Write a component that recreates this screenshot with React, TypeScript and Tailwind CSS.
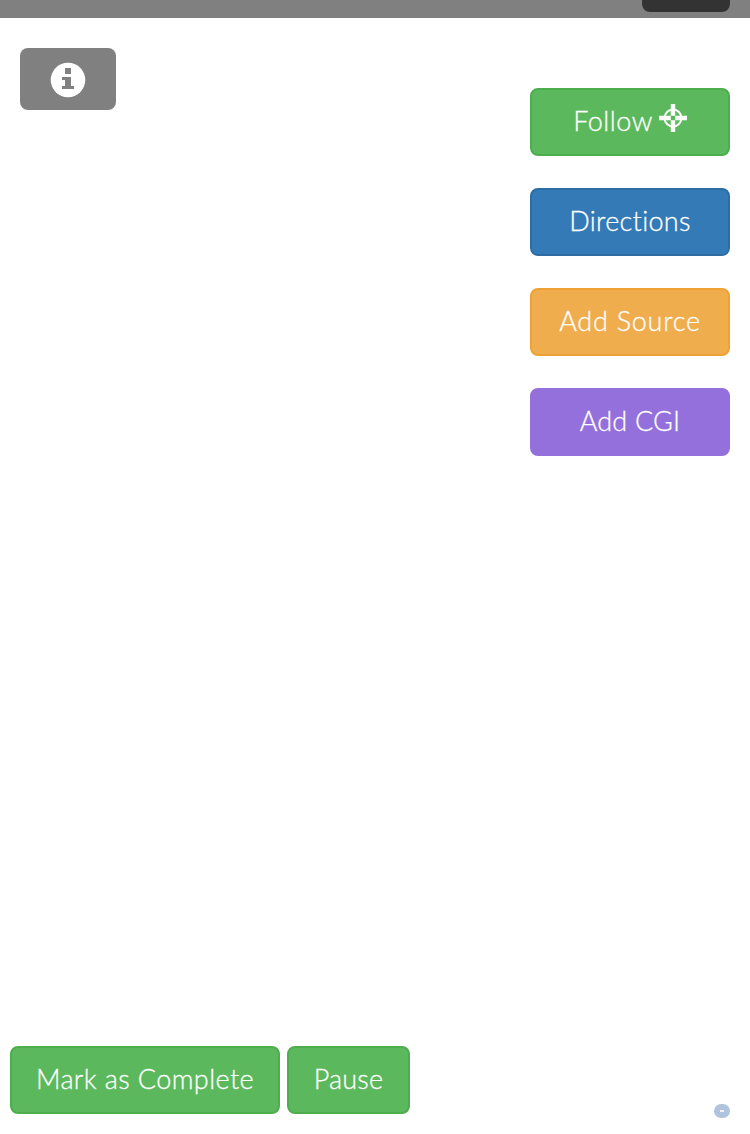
import type { ReactNode } from 'react';

function Action({ tone, label, spacing, children }: { tone: string; label: string; spacing: string; children?: ReactNode }) {
  return (
    <button className={`flex h-[68px] items-center justify-center whitespace-nowrap rounded-lg border-2 pb-1 text-[27px] font-light leading-none text-white [-webkit-text-stroke:0.3px_white] [font-variant-ligatures:none] ${tone}`}>
      <span className={spacing}>{label}</span>
      {children}
    </button>
  );
}

function Crosshair() {
  return (
    <svg className="mb-[5px] ml-[6px] size-7 shrink-0" viewBox="0 0 28 28" fill="none" stroke="white">
      <circle cx="14" cy="14" r="8.4" strokeWidth="2" />
      <path d="M14 0v11.8M14 16.2V28M0 14h11.8M16.2 14H28" strokeWidth="4.4" />
    </svg>
  );
}

export default function App() {
  return (
    <main className="flex h-[1134px] w-[750px] flex-col overflow-hidden bg-white font-['Lato',sans-serif]">
      <header className="flex h-[18px] shrink-0 justify-end bg-[#808080] pr-5">
        <div className="h-3 w-[88px] rounded-b-lg bg-[#333]" />
      </header>
      <section className="flex grow items-start justify-between px-5">
        <button aria-label="Information" className="mt-[30px] flex h-[62px] w-24 items-center justify-center rounded-lg bg-[#808080]">
          <svg className="mt-[2px] size-9" viewBox="0 0 36 36">
            <circle cx="18" cy="18" r="17.3" fill="white" />
            <path d="M15 6h6v6h-6zM12 15h9v9h3v3H12v-3h3v-6h-3z" fill="#808080" />
          </svg>
        </button>
        <nav className="mt-[70px] flex w-[200px] flex-col gap-8">
          <Action tone="border-[#4cae4c] bg-[#5cb85c]" label="Follow" spacing="tracking-[0.5px]"><Crosshair /></Action>
          <Action tone="border-[#2e6da4] bg-[#337ab7]" label="Directions" spacing="tracking-[0.3px]" />
          <Action tone="border-[#eea236] bg-[#f0ad4e]" label="Add Source" spacing="tracking-[0.75px]" />
          <Action tone="border-[#9370db] bg-[#9370db]" label="Add CGI" spacing="tracking-[0.2px]" />
        </nav>
      </section>
      <footer className="flex shrink-0 items-end justify-between pb-5 pl-[10px] pr-5">
        <div className="flex gap-[7px]">
          <Action tone="w-[270px] border-[#4cae4c] bg-[#5cb85c]" label="Mark as Complete" spacing="tracking-[0.4px]" />
          <Action tone="w-[123px] border-[#4cae4c] bg-[#5cb85c]" label="Pause" spacing="tracking-[0.2px]" />
        </div>
        <div className="-mb-1 flex h-[14px] w-4 items-center justify-center rounded-[7px] bg-[#b0c4de]">
          <div className="h-[2px] w-1 bg-[#f3f0ed]" />
        </div>
      </footer>
    </main>
  );
}
